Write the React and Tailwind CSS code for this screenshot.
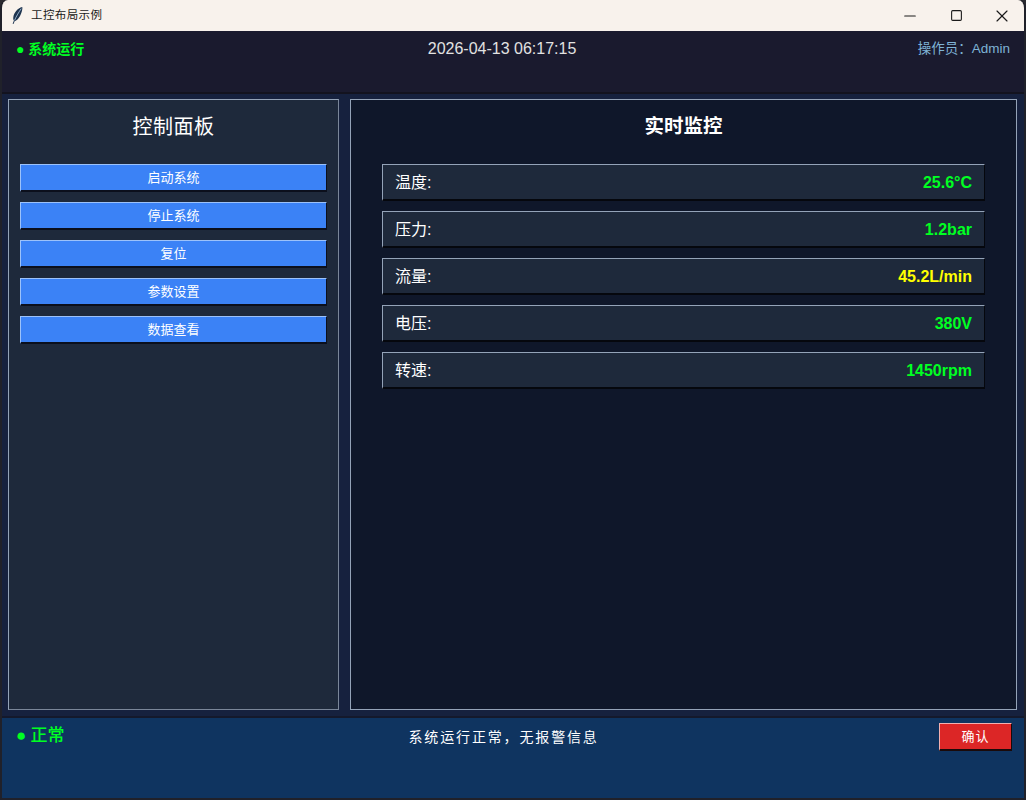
import { Minus, Square, X } from "lucide-react"

const buttons = ["启动系统", "停止系统", "复位", "参数设置", "数据查看"]

const readings = [
    { label: "温度:", value: "25.6°C", color: "text-[#00ff22]" },
    { label: "压力:", value: "1.2bar", color: "text-[#00ff22]" },
    { label: "流量:", value: "45.2L/min", color: "text-[#ffff00]" },
    { label: "电压:", value: "380V", color: "text-[#00ff22]" },
    { label: "转速:", value: "1450rpm", color: "text-[#00ff22]" },
]

const Feather = () => (
    <svg width="13" height="19" viewBox="0 0 12 18" className="block">
        <path d="M10.5 1 C6 2 2.5 6.5 2 11 C1.8 12.5 2.2 13.4 2.6 13.8 L1.4 16.8 L2.2 17 L3.4 14.2 C6 14 8.6 10 10 5.5 C10.6 3.6 10.8 2 10.5 1 Z" fill="#1f3550" />
        <path d="M9.5 2.5 C7.5 5.5 5 9.5 3.2 13.6" stroke="#a8c4e0" strokeWidth="0.8" fill="none" />
    </svg>
)

const App = () => {
    return (
        <div className="w-[1026px] h-[800px] overflow-hidden bg-[#2b2b30] font-['Liberation_Sans','Noto_Sans_CJK_SC',sans-serif]">
            <div className="h-full flex flex-col rounded-t-[8px] overflow-hidden border-x-2 border-b-2 border-[#20212a]">
                <div className="h-[31px] shrink-0 -mx-[1px] bg-[#f8f2ec] flex items-center pl-[10px]">
                    <Feather />
                    <span className="ml-[7px] text-[11.5px] tracking-[0.4px] text-[#1a1a1a]">工控布局示例</span>
                    <div className="ml-auto flex items-center text-[#1a1a1a]">
                        <div className="w-[46px] flex justify-center"><Minus size={18} strokeWidth={1.6} /></div>
                        <div className="w-[46px] flex justify-center"><Square size={13} strokeWidth={2} /></div>
                        <div className="w-[46px] flex justify-center"><X size={20} strokeWidth={1.4} /></div>
                    </div>
                </div>

                <div className="h-[63px] shrink-0 bg-[#1a1a2e] border-b-2 border-[#13131f] flex justify-between items-start pl-[14px] pr-[14px] pt-[8px]">
                    <span className="text-[14px] font-bold leading-[20px] text-[#00ff22]">● 系统运行</span>
                    <span className="ml-[2px] text-[16px] leading-[20px] text-[#e2e2e2]">2026-04-13 06:17:15</span>
                    <span className="text-[13.5px] leading-[20px] text-[#7fb3d5]">操作员：Admin</span>
                </div>

                <div className="flex-1 min-h-0 bg-[#16213e] flex gap-[11px] pl-[6px] pr-[7px] pt-[5px] pb-[6px]">
                    <div className="w-[331px] shrink-0 bg-[#1e293b] border border-[#94a3b8] border-r-[#7a8699] border-b-[#7a8699] px-[11px]">
                        <h2 className="mt-[14px] text-center text-[20px] tracking-[0.5px] font-normal leading-[26px] text-white">控制面板</h2>
                        <div className="mt-[24px] flex flex-col gap-[10px]">
                            {buttons.map((name) => (
                                <div
                                    key={name}
                                    className="h-[28px] pt-[1px] bg-[#3b82f6] border border-[#9cc2fa] border-r-[#0b0f1c] border-b-2 border-b-[#0b0f1c] flex items-center justify-center text-[13px] text-white"
                                >
                                    {name}
                                </div>
                            ))}
                        </div>
                    </div>

                    <div className="flex-1 bg-[#0f172a] border border-[#94a3b8] px-[31px]">
                        <h2 className="mt-[13px] text-center text-[19.5px] font-bold leading-[26px] text-white">实时监控</h2>
                        <div className="mt-[25px] flex flex-col gap-[10px]">
                            {readings.map((item) => (
                                <div
                                    key={item.label}
                                    className="h-[37px] pt-[1px] bg-[#1e293b] border border-[#94a3b8] border-r-[#05070d] border-b-2 border-b-[#05070d] flex items-center justify-between pl-[12px] pr-[12px]"
                                >
                                    <span className="text-[16px] text-white">{item.label}</span>
                                    <span className={`text-[16px] font-bold ${item.color}`}>{item.value}</span>
                                </div>
                            ))}
                        </div>
                    </div>
                </div>

                <div className="h-[82px] shrink-0 bg-[#0f3460] border-t-2 border-[#14192c] flex justify-between items-start pl-[14px] pr-[12px] pt-[5px]">
                    <span className="text-[17px] font-medium leading-[26px] tracking-[-0.2px] text-[#00ff22]">● 正常</span>
                    <span className="text-[14px] tracking-[1.85px] leading-[28px] text-white mr-[-4px]">系统运行正常，无报警信息</span>
                    <div className="w-[73px] h-[28px] bg-[#dc2626] border border-[#f2b0b0] border-r-[#1a0a0a] border-b-2 border-b-[#1a0a0a] flex items-center justify-center text-[13px] tracking-[1px] text-white">
                        确认
                    </div>
                </div>
            </div>
        </div>
    )
}

export default App
